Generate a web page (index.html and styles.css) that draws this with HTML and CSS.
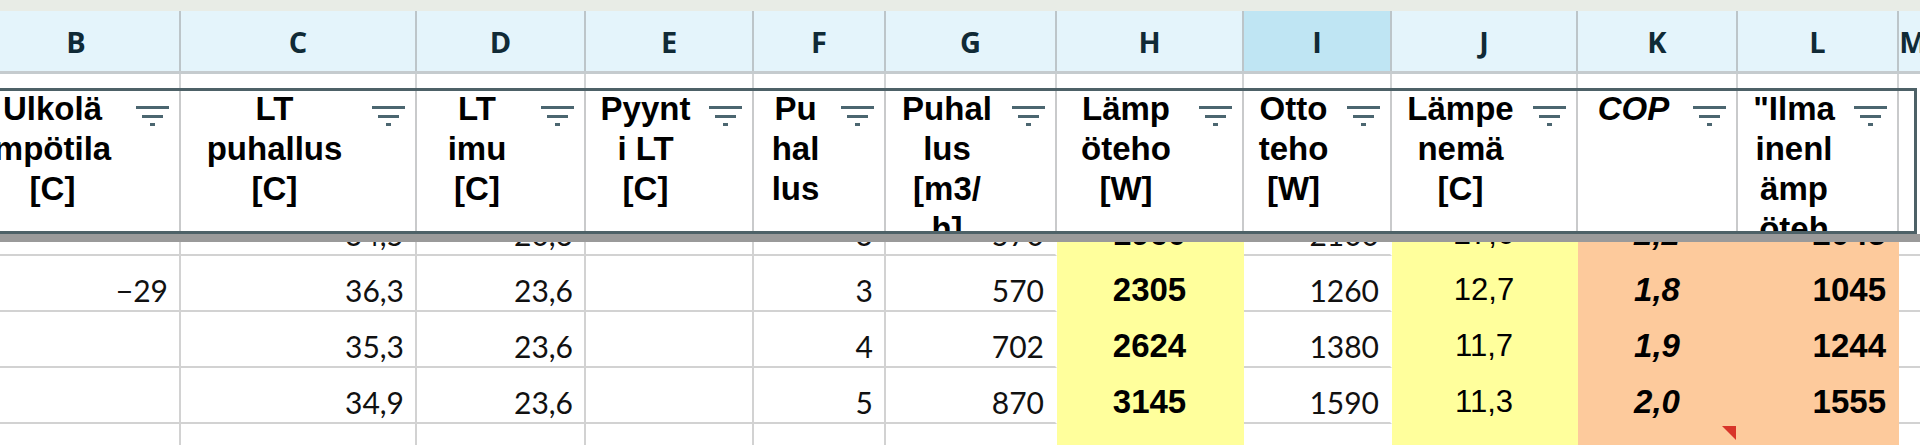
FILE: index.html
```html
<!DOCTYPE html>
<html lang="fi">
<head>
<meta charset="utf-8">
<title>Taulukko</title>
<link rel="stylesheet" href="styles.css">
</head>
<body>
<div class="topbar"></div>
<div class="sheet">
  <div class="row colhead">
    <div class="cell cB">B</div>
    <div class="cell cC">C</div>
    <div class="cell cD">D</div>
    <div class="cell cE">E</div>
    <div class="cell cF">F</div>
    <div class="cell cG">G</div>
    <div class="cell cH">H</div>
    <div class="cell cI sel">I</div>
    <div class="cell cJ">J</div>
    <div class="cell cK">K</div>
    <div class="cell cL">L</div>
    <div class="cell cM">M</div>
    <div class="cell cN">N</div>
  </div>
  <div class="row gap">
    <div class="cell cB"></div><div class="cell cC"></div><div class="cell cD"></div><div class="cell cE"></div><div class="cell cF"></div><div class="cell cG"></div><div class="cell cH"></div><div class="cell cI"></div><div class="cell cJ"></div><div class="cell cK"></div><div class="cell cL"></div><div class="cell cM"></div><div class="cell cN"></div>
  </div>
  <div class="box">
    <div class="cell cB"><div class="htext">Ulkolä<br>mpötila<br>[C]</div><svg class="filter" viewBox="0 0 33 20"><rect x="0" y="0" width="33" height="3"/><rect x="6" y="9" width="21" height="3"/><rect x="14" y="17" width="5" height="3"/></svg></div>
    <div class="cell cC"><div class="htext">LT<br>puhallus<br>[C]</div><svg class="filter" viewBox="0 0 33 20"><rect x="0" y="0" width="33" height="3"/><rect x="6" y="9" width="21" height="3"/><rect x="14" y="17" width="5" height="3"/></svg></div>
    <div class="cell cD"><div class="htext">LT<br>imu<br>[C]</div><svg class="filter" viewBox="0 0 33 20"><rect x="0" y="0" width="33" height="3"/><rect x="6" y="9" width="21" height="3"/><rect x="14" y="17" width="5" height="3"/></svg></div>
    <div class="cell cE"><div class="htext">Pyynt<br>i LT<br>[C]</div><svg class="filter" viewBox="0 0 33 20"><rect x="0" y="0" width="33" height="3"/><rect x="6" y="9" width="21" height="3"/><rect x="14" y="17" width="5" height="3"/></svg></div>
    <div class="cell cF"><div class="htext">Pu<br>hal<br>lus</div><svg class="filter" viewBox="0 0 33 20"><rect x="0" y="0" width="33" height="3"/><rect x="6" y="9" width="21" height="3"/><rect x="14" y="17" width="5" height="3"/></svg></div>
    <div class="cell cG"><div class="htext">Puhal<br>lus<br>[m3/<br>h]</div><svg class="filter" viewBox="0 0 33 20"><rect x="0" y="0" width="33" height="3"/><rect x="6" y="9" width="21" height="3"/><rect x="14" y="17" width="5" height="3"/></svg></div>
    <div class="cell cH"><div class="htext">Lämp<br>öteho<br>[W]</div><svg class="filter" viewBox="0 0 33 20"><rect x="0" y="0" width="33" height="3"/><rect x="6" y="9" width="21" height="3"/><rect x="14" y="17" width="5" height="3"/></svg></div>
    <div class="cell cI"><div class="htext">Otto<br>teho<br>[W]</div><svg class="filter" viewBox="0 0 33 20"><rect x="0" y="0" width="33" height="3"/><rect x="6" y="9" width="21" height="3"/><rect x="14" y="17" width="5" height="3"/></svg></div>
    <div class="cell cJ"><div class="htext">Lämpe<br>nemä<br>[C]</div><svg class="filter" viewBox="0 0 33 20"><rect x="0" y="0" width="33" height="3"/><rect x="6" y="9" width="21" height="3"/><rect x="14" y="17" width="5" height="3"/></svg></div>
    <div class="cell cK"><div class="htext it">COP</div><svg class="filter" viewBox="0 0 33 20"><rect x="0" y="0" width="33" height="3"/><rect x="6" y="9" width="21" height="3"/><rect x="14" y="17" width="5" height="3"/></svg></div>
    <div class="cell cL"><div class="htext">"Ilma<br>inenl<br>ämp<br>öteh</div><svg class="filter" viewBox="0 0 33 20"><rect x="0" y="0" width="33" height="3"/><rect x="6" y="9" width="21" height="3"/><rect x="14" y="17" width="5" height="3"/></svg></div>
    <div class="cell cMbox"></div>
  </div>
  <div class="shade"></div>
  <div class="row drow partial">
    <div class="cell cB"></div>
    <div class="cell cC">34,5</div>
    <div class="cell cD">20,6</div>
    <div class="cell cE"></div>
    <div class="cell cF">3</div>
    <div class="cell cG nb">570</div>
    <div class="cell cH y b c">1960</div>
    <div class="cell cI nb">2100</div>
    <div class="cell cJ y ar c">27,6</div>
    <div class="cell cK o bi c">2,2</div>
    <div class="cell cL o b">2045</div>
    <div class="cell cM"></div>
    <div class="cell cN"></div>
  </div>
  <div class="row drow">
    <div class="cell cB">−29</div>
    <div class="cell cC">36,3</div>
    <div class="cell cD">23,6</div>
    <div class="cell cE"></div>
    <div class="cell cF">3</div>
    <div class="cell cG nb">570</div>
    <div class="cell cH y b c">2305</div>
    <div class="cell cI nb">1260</div>
    <div class="cell cJ y ar c">12,7</div>
    <div class="cell cK o bi c">1,8</div>
    <div class="cell cL o b">1045</div>
    <div class="cell cM"></div>
    <div class="cell cN"></div>
  </div>
  <div class="row drow">
    <div class="cell cB"></div>
    <div class="cell cC">35,3</div>
    <div class="cell cD">23,6</div>
    <div class="cell cE"></div>
    <div class="cell cF">4</div>
    <div class="cell cG nb">702</div>
    <div class="cell cH y b c">2624</div>
    <div class="cell cI nb">1380</div>
    <div class="cell cJ y ar c">11,7</div>
    <div class="cell cK o bi c">1,9</div>
    <div class="cell cL o b">1244</div>
    <div class="cell cM"></div>
    <div class="cell cN"></div>
  </div>
  <div class="row drow">
    <div class="cell cB"></div>
    <div class="cell cC">34,9</div>
    <div class="cell cD">23,6</div>
    <div class="cell cE"></div>
    <div class="cell cF">5</div>
    <div class="cell cG nb">870</div>
    <div class="cell cH y b c">3145</div>
    <div class="cell cI nb">1590</div>
    <div class="cell cJ y ar c">11,3</div>
    <div class="cell cK o bi c">2,0</div>
    <div class="cell cL o b">1555</div>
    <div class="cell cM"></div>
    <div class="cell cN"></div>
  </div>
  <div class="row drow">
    <div class="cell cB"></div>
    <div class="cell cC"></div>
    <div class="cell cD"></div>
    <div class="cell cE"></div>
    <div class="cell cF"></div>
    <div class="cell cG nb"></div>
    <div class="cell cH y"></div>
    <div class="cell cI nb"></div>
    <div class="cell cJ y"></div>
    <div class="cell cK o note"></div>
    <div class="cell cL o"></div>
    <div class="cell cM"></div>
    <div class="cell cN"></div>
  </div>
</div>
</body>
</html>
```

FILE: styles.css
```css
* { box-sizing: border-box; }
html, body { margin: 0; padding: 0; }
body {
  width: 1920px;
  height: 445px;
  overflow: hidden;
  background: #ffffff;
  font-family: "Liberation Sans", Arial, sans-serif;
}
.topbar { height: 11px; background: #e8ece6; }
.sheet { margin-left: -27px; width: 2240px; }
.row { display: flex; }
.cell { flex: none; }
.cB { width: 208px; }
.cC { width: 236px; }
.cD { width: 169px; }
.cE { width: 168px; }
.cF { width: 132px; }
.cG { width: 171px; }
.cH { width: 187px; }
.cI { width: 148px; }
.cJ { width: 186px; }
.cK { width: 160px; }
.cL { width: 161px; }
.cM { width: 30px; }
.cN { width: 200px; }
.cMbox { width: 15px; }

/* column letters */
.colhead {
  height: 63px;
  background: #e4f4fb;
  border-bottom: 3px solid #c5cbce;
}
.colhead .cell {
  border-right: 2px solid #bcc5c9;
  display: flex;
  align-items: center;
  justify-content: center;
  padding-top: 1px;
  font-family: "Open Sans", "Inter", sans-serif;
  font-weight: 700;
  font-size: 29px;
  color: #102a36;
}
.colhead .sel { background: #bfe5f3; }

.gap { height: 14px; }
.gap .cell { border-right: 2px solid #d2d4d5; }

/* frozen header box */
.box {
  display: flex;
  margin-left: -3px;
  width: 1947px;
  height: 146px;
  border: 3px solid #4d6167;
  overflow: hidden;
}
.box .cell {
  height: 100%;
  display: flex;
  overflow: hidden;
  border-right: 2px solid #c9cacb;
}
.box .cMbox { border-right: none; }
.htext {
  flex: 1;
  margin-top: -2px;
  text-align: center;
  white-space: nowrap;
  font-weight: bold;
  font-size: 33px;
  line-height: 40px;
  color: #000000;
}
.htext.it { font-style: italic; }
.filter {
  flex: none;
  width: 33px;
  height: 20px;
  margin: 15px 10px 0 4px;
  fill: #4b6670;
}

.shade { height: 8px; background: #9a9a9a; }

/* data rows */
.drow { height: 56px; }
.drow.partial { height: 14px; }
.drow .cell {
  display: flex;
  align-items: flex-end;
  justify-content: flex-end;
  padding: 0 11px 2px;
  overflow: hidden;
  white-space: nowrap;
  border-right: 2px solid #d2d2d2;
  border-bottom: 2px solid #d2d2d2;
  font-family: "Lato", sans-serif;
  font-size: 30px;
  line-height: 36px;
  color: #111111;
}
.drow .cell.nb { border-right-color: transparent; }
.drow .cell.y { background: #ffff9c; border-color: #ffff9c; }
.drow .cell.o { background: #fdca9c; border-color: #fdca9c; }
.drow .cell.c { justify-content: center; }
.drow .cell.b {
  font-family: "Liberation Sans", Arial, sans-serif;
  font-weight: bold;
  font-size: 33px;
  color: #000000;
}
.drow .cell.bi {
  font-family: "Liberation Sans", Arial, sans-serif;
  font-weight: bold;
  font-style: italic;
  font-size: 33px;
  color: #000000;
}
.drow .cell.ar {
  font-family: "Liberation Sans", Arial, sans-serif;
  font-size: 31px;
  color: #000000;
}
.note { position: relative; }
.note::after {
  content: "";
  position: absolute;
  top: 2px;
  right: 0;
  border-top: 14px solid #d8352a;
  border-left: 14px solid transparent;
}
```
